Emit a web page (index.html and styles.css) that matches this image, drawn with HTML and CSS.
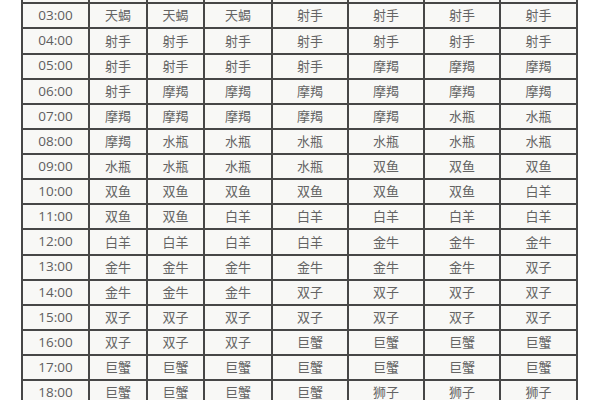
FILE: index.html
```html
<!DOCTYPE html>
<html lang="zh">
<head>
<meta charset="utf-8">
<title>上升星座查询表</title>
<link rel="stylesheet" href="styles.css">
</head>
<body>
<div class="table">
  <div class="cell"></div><div class="cell"></div><div class="cell"></div><div class="cell"></div><div class="cell"></div><div class="cell"></div><div class="cell"></div><div class="cell"></div>
  <div class="cell time">03:00</div><div class="cell">天蝎</div><div class="cell">天蝎</div><div class="cell">天蝎</div><div class="cell">射手</div><div class="cell">射手</div><div class="cell">射手</div><div class="cell">射手</div>
  <div class="cell time">04:00</div><div class="cell">射手</div><div class="cell">射手</div><div class="cell">射手</div><div class="cell">射手</div><div class="cell">射手</div><div class="cell">射手</div><div class="cell">射手</div>
  <div class="cell time">05:00</div><div class="cell">射手</div><div class="cell">射手</div><div class="cell">射手</div><div class="cell">射手</div><div class="cell">摩羯</div><div class="cell">摩羯</div><div class="cell">摩羯</div>
  <div class="cell time">06:00</div><div class="cell">射手</div><div class="cell">摩羯</div><div class="cell">摩羯</div><div class="cell">摩羯</div><div class="cell">摩羯</div><div class="cell">摩羯</div><div class="cell">摩羯</div>
  <div class="cell time">07:00</div><div class="cell">摩羯</div><div class="cell">摩羯</div><div class="cell">摩羯</div><div class="cell">摩羯</div><div class="cell">摩羯</div><div class="cell">水瓶</div><div class="cell">水瓶</div>
  <div class="cell time">08:00</div><div class="cell">摩羯</div><div class="cell">水瓶</div><div class="cell">水瓶</div><div class="cell">水瓶</div><div class="cell">水瓶</div><div class="cell">水瓶</div><div class="cell">水瓶</div>
  <div class="cell time">09:00</div><div class="cell">水瓶</div><div class="cell">水瓶</div><div class="cell">水瓶</div><div class="cell">水瓶</div><div class="cell">双鱼</div><div class="cell">双鱼</div><div class="cell">双鱼</div>
  <div class="cell time">10:00</div><div class="cell">双鱼</div><div class="cell">双鱼</div><div class="cell">双鱼</div><div class="cell">双鱼</div><div class="cell">双鱼</div><div class="cell">双鱼</div><div class="cell">白羊</div>
  <div class="cell time">11:00</div><div class="cell">双鱼</div><div class="cell">双鱼</div><div class="cell">白羊</div><div class="cell">白羊</div><div class="cell">白羊</div><div class="cell">白羊</div><div class="cell">白羊</div>
  <div class="cell time">12:00</div><div class="cell">白羊</div><div class="cell">白羊</div><div class="cell">白羊</div><div class="cell">白羊</div><div class="cell">金牛</div><div class="cell">金牛</div><div class="cell">金牛</div>
  <div class="cell time">13:00</div><div class="cell">金牛</div><div class="cell">金牛</div><div class="cell">金牛</div><div class="cell">金牛</div><div class="cell">金牛</div><div class="cell">金牛</div><div class="cell">双子</div>
  <div class="cell time">14:00</div><div class="cell">金牛</div><div class="cell">金牛</div><div class="cell">金牛</div><div class="cell">双子</div><div class="cell">双子</div><div class="cell">双子</div><div class="cell">双子</div>
  <div class="cell time">15:00</div><div class="cell">双子</div><div class="cell">双子</div><div class="cell">双子</div><div class="cell">双子</div><div class="cell">双子</div><div class="cell">双子</div><div class="cell">双子</div>
  <div class="cell time">16:00</div><div class="cell">双子</div><div class="cell">双子</div><div class="cell">双子</div><div class="cell">巨蟹</div><div class="cell">巨蟹</div><div class="cell">巨蟹</div><div class="cell">巨蟹</div>
  <div class="cell time">17:00</div><div class="cell">巨蟹</div><div class="cell">巨蟹</div><div class="cell">巨蟹</div><div class="cell">巨蟹</div><div class="cell">巨蟹</div><div class="cell">巨蟹</div><div class="cell">巨蟹</div>
  <div class="cell time">18:00</div><div class="cell">巨蟹</div><div class="cell">巨蟹</div><div class="cell">巨蟹</div><div class="cell">巨蟹</div><div class="cell">狮子</div><div class="cell">狮子</div><div class="cell">狮子</div>
</div>
</body>
</html>
```
FILE: styles.css
```css
html, body {
  margin: 0;
  padding: 0;
  background: #ffffff;
  overflow: hidden;
}

body {
  width: 600px;
  height: 400px;
  font-family: "Open Sans", "Noto Sans CJK SC", sans-serif;
}

.table {
  display: grid;
  grid-template-columns: 65px 56px 55px 66px 74px 74px 74px 75px;
  grid-auto-rows: 23.13px;
  gap: 2px;
  padding: 2px;
  width: max-content;
  margin: -22.8px 0 0 21px;
  background: #474747;
}

.cell {
  display: flex;
  align-items: center;
  justify-content: center;
  background: #f8f8f6;
  color: #646464;
  font-size: 13px;
  line-height: 1;
}

.time {
  font-size: 13.5px;
  color: #5e5e5e;
}
```
